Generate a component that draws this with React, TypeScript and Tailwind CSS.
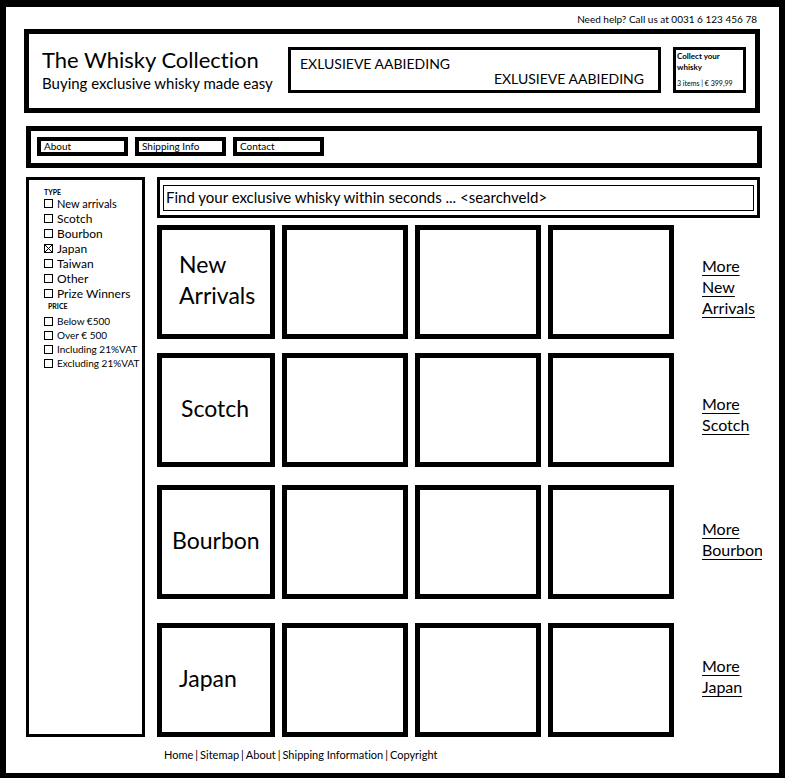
import React from "react";

const typeFilters = [
  { label: "New arrivals", text: "text-[11px]" },
  { label: "Scotch", text: "text-[12px]" },
  { label: "Bourbon", text: "text-[12px]" },
  { label: "Japan", text: "text-[12px]", checked: true },
  { label: "Taiwan", text: "text-[12px]" },
  { label: "Other", text: "text-[12px]" },
  { label: "Prize Winners", text: "text-[12px]" },
];

const priceFilters = ["Below €500", "Over € 500", "Including 21%VAT", "Excluding 21%VAT"];

const categories = [
  { name: "New Arrivals", row: "mt-[7px]", indent: "pl-[17px]", link: "pt-[9px]" },
  { name: "Scotch", row: "mt-[14px]", indent: "pl-[19px]", link: "pt-[7px]" },
  { name: "Bourbon", row: "mt-[18px]", indent: "pl-[10px]", link: "pb-[7px]" },
  { name: "Japan", row: "mt-[24px]", indent: "pl-[17px]", link: "pb-[9px]" },
];

const footerLinks = ["Home", "Sitemap", "About", "Shipping Information", "Copyright"];

function Tick({ id, checked }: { id: string; checked?: boolean }) {
  return (
    <span className="relative flex size-[9px] shrink-0">
      <input
        id={id}
        type="checkbox"
        defaultChecked={checked}
        className="peer size-[9px] appearance-none border border-black bg-white"
      />
      <svg
        viewBox="0 0 9 9"
        className="pointer-events-none absolute inset-0 hidden size-[9px] peer-checked:block"
        stroke="black"
        strokeWidth="1"
      >
        <path d="M1 1L8 8M8 1L1 8" />
      </svg>
    </span>
  );
}

function Sidebar() {
  return (
    <aside className="w-[119px] shrink-0 overflow-hidden border-[3px] border-black pt-[9px] pl-[15px]">
      <fieldset>
        <legend className="text-[7px] leading-[7px] font-bold">TYPE</legend>
        {typeFilters.map((f, i) => (
          <div key={f.label} className="flex h-[15px] items-center gap-[4px]">
            <Tick id={`type-${i}`} checked={f.checked} />
            <label htmlFor={`type-${i}`} className={`${f.text} leading-[15px] whitespace-nowrap`}>
              {f.label}
            </label>
          </div>
        ))}
      </fieldset>
      <fieldset className="mt-[2px]">
        <legend className="pl-[4px] text-[7px] leading-[7px] font-bold">PRICE</legend>
        <div className="pt-[4px]">
          {priceFilters.map((label, i) => (
            <div key={label} className="flex h-[14px] items-center gap-[4px]">
              <Tick id={`price-${i}`} />
              <label htmlFor={`price-${i}`} className="text-[10px] leading-[14px] whitespace-nowrap">
                {label}
              </label>
            </div>
          ))}
        </div>
      </fieldset>
    </aside>
  );
}

export default function App() {
  return (
    <div className="min-h-screen border-x-[6px] border-t-[7px] border-b-[5px] border-black bg-white font-['Lato','Open_Sans',sans-serif] text-black [font-variant-ligatures:none]">
      <div className="pr-[19px] pl-[18px]">
        <p className="h-[22px] pr-[3px] text-right text-[10px] leading-[24px]">
          Need help? Call us at 0031 6 123 456 78
        </p>
        <header className="flex h-[84px] items-start border-[5px] border-black pt-[13px] pr-[9px] pl-[13px]">
          <div className="w-[246px] shrink-0">
            <h1 className="text-[22px] leading-[26px]">The Whisky Collection</h1>
            <p className="text-[15px] leading-[20px] whitespace-nowrap">Buying exclusive whisky made easy</p>
          </div>
          <div className="flex h-[46px] min-w-0 flex-1 flex-col justify-center border-[3px] border-black pt-[2px] pr-[14px] pl-[9px] text-[14px] leading-[15px]">
            <p>EXLUSIEVE AABIEDING</p>
            <p className="text-right">EXLUSIEVE AABIEDING</p>
          </div>
          <div className="ml-[12px] h-[46px] w-[73px] shrink-0 border-[3px] border-black pt-[1px] pl-[1px]">
            <p className="text-[8px] leading-[11px] font-bold">
              Collect your
              <br />
              whisky
            </p>
            <p className="mt-[5px] text-[7px] leading-[10px] whitespace-nowrap">3 items | € 399,99</p>
          </div>
        </header>
      </div>

      <div className="pr-[17px] pl-[20px]">
        <nav className="mt-[13px] flex h-[42px] items-start gap-[7px] border-[5px] border-black px-[6px] pt-[6px] text-[10px]">
          {["About", "Shipping Info", "Contact"].map((item) => (
            <a key={item} href="#" className="h-[19px] w-[91px] border-4 border-black pl-[3px] leading-[11px]">
              {item}
            </a>
          ))}
        </nav>

        <div className="mt-[9px] flex gap-[12px]">
          <Sidebar />
          <main className="min-w-0 flex-1">
            <form className="mr-[2px] h-[41px] border-[3px] border-black px-[3px] py-[5px]">
              <input
                type="text"
                aria-label="Search"
                placeholder="Find your exclusive whisky within seconds ... <searchveld>"
                className="block h-[26px] w-full border border-black pb-[2px] pl-[2px] text-[15px] placeholder:text-black placeholder:opacity-100"
              />
            </form>
            {categories.map((c) => (
              <section
                key={c.name}
                className={`${c.row} grid h-[114px] grid-cols-[118fr_126fr_126fr_126fr_81fr] gap-[7px]`}
              >
                <h2
                  className={`${c.indent} flex min-w-0 items-center border-[5px] border-black pb-[4px] text-[23px] leading-[31px]`}
                >
                  {c.name}
                </h2>
                <div className="border-[5px] border-black" />
                <div className="border-[5px] border-black" />
                <div className="border-[5px] border-black" />
                <div className={`${c.link} flex min-w-0 items-center overflow-hidden pl-[21px]`}>
                  <a href="#" className="text-[16px] leading-[21px] underline decoration-1 underline-offset-[3px]">
                    More
                    <br />
                    {c.name}
                  </a>
                </div>
              </section>
            ))}
          </main>
        </div>

        <footer className="flex h-[36px] items-center gap-[2px] pl-[138px] text-[11px]">
          {footerLinks.map((l, i) => (
            <React.Fragment key={l}>
              {i > 0 && <span>|</span>}
              <a href="#">{l}</a>
            </React.Fragment>
          ))}
        </footer>
      </div>
    </div>
  );
}
